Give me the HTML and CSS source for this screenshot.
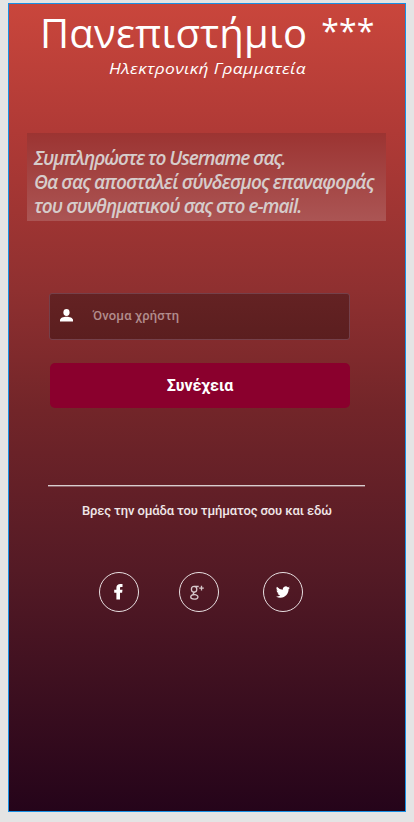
FILE: index.html
```html
<!DOCTYPE html>
<html lang="el">
<head>
<meta charset="utf-8">
<title>Ηλεκτρονική Γραμματεία</title>
<link rel="stylesheet" href="styles.css">
</head>
<body>
<main class="screen">
  <header class="header">
    <h1 class="title">Πανεπιστήμιο <span class="stars">***</span></h1>
    <p class="subtitle">Ηλεκτρονική Γραμματεία</p>
  </header>
  <p class="notice">
    <span class="line line-1">Συμπληρώστε το Username σας.</span>
    <span class="line line-2">Θα σας αποσταλεί σύνδεσμος επαναφοράς</span>
    <span class="line line-3">του συνθηματικού σας στο e-mail.</span>
  </p>
  <form class="form">
    <div class="field">
      <svg class="user" viewBox="0 0 13 13"><ellipse cx="6.5" cy="3.5" rx="3.1" ry="3.4"/><path d="M0 12.5V11C0 8.9 3.5 7.7 6.5 7.7S13 8.9 13 11v1.5z"/></svg>
      <span class="placeholder">Όνομα χρήστη</span>
    </div>
    <button class="submit" type="button"><span>Συνέχεια</span></button>
  </form>
  <footer class="footer">
    <div class="rule"></div>
    <p class="find">Βρες την ομάδα του τμήματος σου και εδώ</p>
    <nav class="social">
      <a class="round"><svg viewBox="0 0 40 40"><path class="fill" d="M17.4 27.5v-6.7h-2.2v-3h2.2v-2c0-2.6 1.6-3.7 3.9-3.7h2.2v2.9h-1.4c-.8 0-1.1.4-1.1 1.1v1.7h2.5l-.4 3H21v6.7z"/></svg></a>
      <a class="round"><svg viewBox="0 0 40 40"><g class="stroke"><ellipse cx="15.1" cy="17.3" rx="2.7" ry="2.9"/><path d="M19.7 14.5h-4.1M15.7 20.2c-1.7.7-2 1.6-.2 2.1 2.4.6 3.8 1.3 3.4 3-.6 2.5-7.2 2.4-7.2-.2 0-1.8 1.8-2.5 4-2.6"/><path d="M22.5 13.8v4.6M20.2 16.1h4.6"/></g></svg></a>
      <a class="round last"><svg viewBox="0 0 24 24"><path class="fill" d="M23.95 4.57a10 10 0 0 1-2.82.77 4.96 4.96 0 0 0 2.16-2.72 9.9 9.9 0 0 1-3.12 1.19 4.92 4.92 0 0 0-8.38 4.48A13.98 13.98 0 0 1 1.64 3.16a4.92 4.92 0 0 0 1.52 6.57 4.9 4.9 0 0 1-2.23-.61v.06a4.92 4.92 0 0 0 3.95 4.83 5 5 0 0 1-2.21.08 4.94 4.94 0 0 0 4.6 3.42A9.87 9.87 0 0 1 0 19.54a14 14 0 0 0 7.55 2.21c9.05 0 14-7.5 14-13.98 0-.21 0-.42-.02-.63a9.94 9.94 0 0 0 2.42-2.57z"/></svg></a>
    </nav>
  </footer>
</main>
</body>
</html>
```

FILE: styles.css
```css
* { box-sizing: border-box; }
body { margin: 0; padding: 3px 8px 10px; background: #e4e4e4; }
p, h1 { margin: 0; }
.screen {
  height: 809px;
  border: 1px solid #1890e4;
  background: linear-gradient(#c9463c 0, #b03a36 126px, #8f3030 286px, #722529 406px, #541a25 566px, #25041a 807px);
  color: #fff;
  font-family: "Open Sans", "Noto Sans", sans-serif;
}
.header { height: 129px; }
.title {
  display: flex;
  padding: 0 0 0 31px;
  font-size: 40px;
  line-height: 57px;
  font-weight: 400;
  letter-spacing: .25px;
  white-space: nowrap;
}
.stars {
  margin: -2px 0 0 14px;
  font-size: 32px;
  letter-spacing: .1px;
}
.subtitle {
  width: max-content;
  margin: -2px 0 0 100px;
  font-size: 15px;
  line-height: 18px;
  font-style: italic;
  letter-spacing: .3px;
  white-space: nowrap;
  transform: scaleX(1.16);
  transform-origin: left;
}
.notice {
  width: 359px;
  height: 88px;
  margin-left: 18px;
  padding: 13px 0 0 7px;
  background: linear-gradient(#9c3432, #ab5554);
  color: #d6cccb;
  font-size: 19px;
  line-height: 24px;
  font-style: italic;
  font-weight: 600;
  white-space: nowrap;
}
.line { display: block; }
.line-1 { letter-spacing: -1.07px; }
.line-2 { letter-spacing: -.88px; }
.line-3 { letter-spacing: -.93px; }
.form { width: 301px; margin: 72px 0 0 40px; }
.field {
  display: flex;
  align-items: center;
  height: 47px;
  padding-left: 10px;
  border: 1px solid #75404a;
  border-radius: 3px;
  background: linear-gradient(#642223, #5b1e1f);
}
.user { width: 13px; height: 13px; margin-top: -3px; fill: #fff; }
.placeholder {
  margin: -2px 0 0 20px;
  color: #b18c8c;
  font: 500 13px/20px Roboto, sans-serif;
  letter-spacing: .15px;
}
.submit {
  display: block;
  width: 300px;
  height: 45px;
  margin: 23px 0 0 1px;
  padding: 0;
  border: 0;
  border-radius: 5px;
  background: #8a002d;
  color: #fff;
  font: 700 16px/20px Roboto, sans-serif;
}
.footer { width: 317px; margin: 77px 0 0 39px; }
.rule { height: 2px; background: linear-gradient(#dacdce 50%, #8e626a 50%); }
.find {
  padding: 14px 0 0 34px;
  color: #f0e7e8;
  font: 500 13px/20px Roboto, sans-serif;
  letter-spacing: -.13px;
  white-space: nowrap;
}
.social { display: flex; padding: 51px 0 0 51px; gap: 40px; }
.round {
  display: flex;
  align-items: center;
  justify-content: center;
  width: 40px;
  height: 40px;
  border: 1px solid #e8dfe1;
  border-radius: 50%;
}
.round svg { width: 40px; height: 40px; flex: none; }
.last { margin-left: 4px; }
.round.last svg { width: 14px; height: 14px; }
.fill { fill: #fff; }
.stroke { fill: none; stroke: #d7c8cb; stroke-width: 1.3; }
```
